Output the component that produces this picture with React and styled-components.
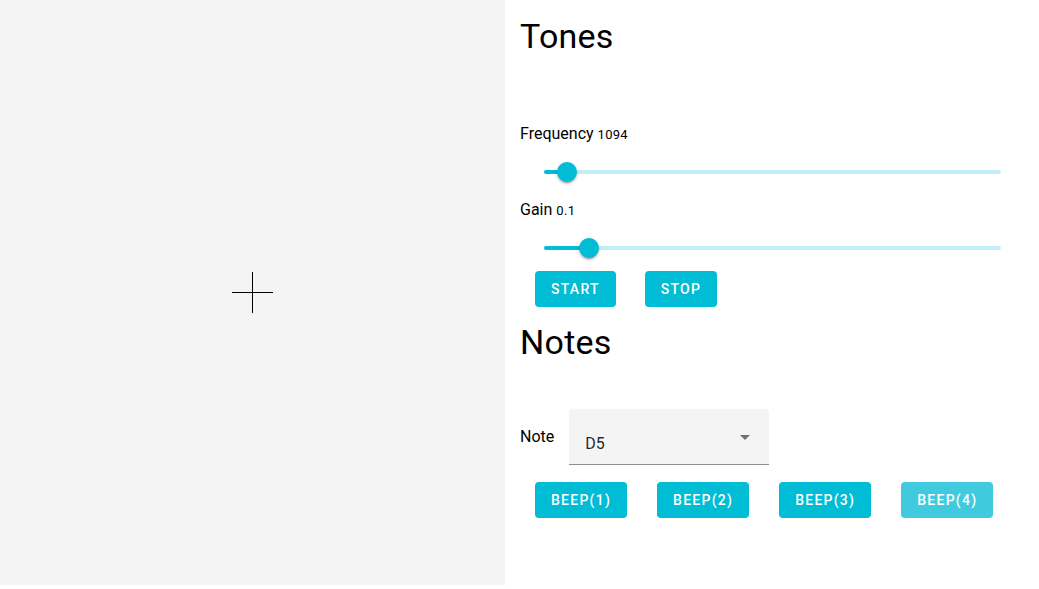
import styled, { createGlobalStyle } from "styled-components";
import { useState } from "react";

const GlobalStyle = createGlobalStyle`
  html, body {
    margin: 0;
    padding: 0;
    background: #ffffff;
    font-family: Roboto, "Liberation Sans", sans-serif;
    color: rgba(0, 0, 0, 0.87);
  }
`;

const CYAN = "#00bcd4";

const App = () => {
  const [freq] = useState(1094);
  const [gain] = useState(0.1);

  // slider positions as fractions of the track
  const freqPos = 23 / 457;
  const gainPos = 45 / 457;

  return (
    <>
      <GlobalStyle />
      <Page>
        <Canvas>
          <svg width="41" height="41" viewBox="0 0 41 41">
            <line x1="0" y1="20.5" x2="41" y2="20.5" stroke="#000" strokeWidth="1" />
            <line x1="20.5" y1="0" x2="20.5" y2="41" stroke="#000" strokeWidth="1" />
          </svg>
        </Canvas>

        <Controls>
          <Heading>Tones</Heading>
          <Label first>
            Frequency <small>{freq}</small>
          </Label>
          <Slider pos={freqPos} />
          <Label>
            Gain <small>{gain}</small>
          </Label>
          <Slider pos={gainPos} last />
          <ButtonRow gap={29}>
            <Button>Start</Button>
            <Button>Stop</Button>
          </ButtonRow>

          <Heading notes>Notes</Heading>
          <NoteRow>
            <NoteLabel>Note</NoteLabel>
            <Select>
              <span>D5</span>
              <Arrow />
            </Select>
          </NoteRow>
          <ButtonRow gap={30} beeps>
            {[1, 2, 3, 4].map((n) => (
              <Button key={n} light={n === 4}>
                Beep({n})
              </Button>
            ))}
          </ButtonRow>
        </Controls>
      </Page>
    </>
  );
};

const Slider = ({ pos, last }) => (
  <SliderRow last={last}>
    <Rail />
    <Track style={{ width: `${pos * 100}%` }} />
    <Thumb style={{ left: `${pos * 100}%` }} />
  </SliderRow>
);

const Page = styled.div`
  display: flex;
  align-items: flex-start;
  width: 1039px;
`;

const Canvas = styled.div`
  width: 505px;
  height: 585px;
  flex-shrink: 0;
  background: #f4f4f4;
  display: flex;
  align-items: center;
  justify-content: center;

  svg {
    display: block;
  }
`;

const Controls = styled.div`
  flex: 1;
  padding-left: 15px;
  display: flex;
  flex-direction: column;
`;

const Heading = styled.h4`
  margin: ${(p) => (p.notes ? "14px 0 0" : "14.5px 0 0")};
  font-size: 34px;
  font-weight: 400;
  line-height: 42px;
  letter-spacing: 0.25px;
  color: #000;
`;

const Label = styled.div`
  margin-top: ${(p) => (p.first ? "65px" : "0")};
  font-size: 16px;
  line-height: 24px;
  color: #000;

  small {
    font-size: 13px;
    letter-spacing: 0.3px;
  }
`;

const SliderRow = styled.div`
  position: relative;
  margin: 15.5px 0 ${(p) => (p.last ? "12.5px" : "15.5px")} 24px;
  width: 457px;
  height: 20px;
`;

const Rail = styled.div`
  position: absolute;
  left: 0;
  right: 0;
  top: 8px;
  height: 4px;
  border-radius: 2px;
  background: ${CYAN};
  opacity: 0.24;
`;

const Track = styled.div`
  position: absolute;
  left: 0;
  top: 8px;
  height: 4px;
  border-radius: 2px;
  background: ${CYAN};
`;

const Thumb = styled.div`
  position: absolute;
  top: 0;
  width: 20px;
  height: 20px;
  margin-left: -10px;
  border-radius: 50%;
  background: ${CYAN};
  box-shadow: 0 3px 1px -2px rgba(0, 0, 0, 0.2), 0 2px 2px 0 rgba(0, 0, 0, 0.14),
    0 1px 5px 0 rgba(0, 0, 0, 0.12);
`;

const ButtonRow = styled.div`
  display: flex;
  gap: ${(p) => p.gap}px;
  padding-left: 15px;
  margin-top: ${(p) => (p.beeps ? "17px" : "0")};
`;

const Button = styled.button`
  height: 36px;
  min-width: 64px;
  padding: 0 16px;
  border: none;
  border-radius: 4px;
  background: ${(p) => (p.light ? "#3fcbdd" : CYAN)};
  color: #ffffff;
  font-family: Roboto, "Liberation Sans", sans-serif;
  font-size: 14px;
  font-weight: 500;
  letter-spacing: 1.25px;
  text-transform: uppercase;
  cursor: pointer;
`;

const NoteRow = styled.div`
  display: flex;
  align-items: center;
  gap: 15px;
  margin-top: 46.5px;
`;

const NoteLabel = styled.span`
  font-size: 16px;
  line-height: 24px;
  color: #000;
`;

const Select = styled.div`
  position: relative;
  box-sizing: border-box;
  width: 200px;
  height: 56px;
  padding: 25px 16px 0;
  background: #f4f4f4;
  border-top-left-radius: 4px;
  border-top-right-radius: 4px;
  border-bottom: 1px solid rgba(0, 0, 0, 0.42);
  font-size: 16px;
  line-height: 19px;
  color: rgba(0, 0, 0, 0.87);
`;

const Arrow = styled.span`
  position: absolute;
  right: 19px;
  top: 25.5px;
  width: 0;
  height: 0;
  border-left: 5px solid transparent;
  border-right: 5px solid transparent;
  border-top: 5px solid rgba(0, 0, 0, 0.54);
`;

export default App;
